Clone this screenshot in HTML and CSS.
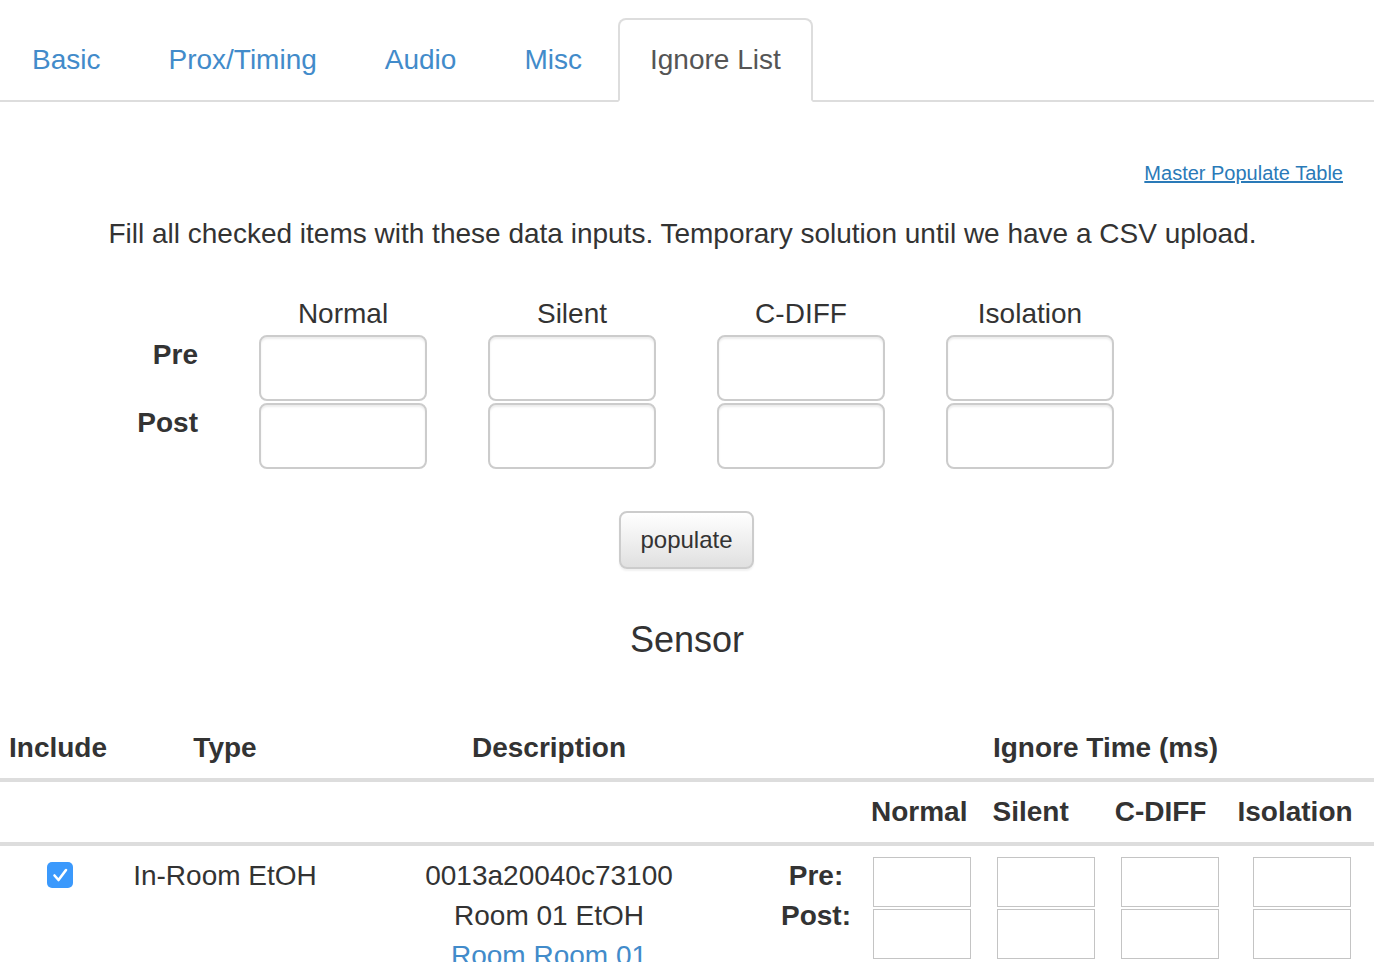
FILE: index.html
```html
<!DOCTYPE html>
<html>
<head>
<meta charset="utf-8">
<title>Ignore List</title>
<link rel="stylesheet" href="styles.css">
</head>
<body>
<div class="page">
  <ul class="tabs">
    <li class="tab"><a href="#">Basic</a></li>
    <li class="tab"><a href="#">Prox/Timing</a></li>
    <li class="tab"><a href="#">Audio</a></li>
    <li class="tab"><a href="#">Misc</a></li>
    <li class="tab active"><a href="#">Ignore List</a></li>
  </ul>

  <div class="master-row"><a class="master-link" href="#">Master Populate Table</a></div>

  <p class="intro">Fill all checked items with these data inputs. Temporary solution until we have a CSV upload.</p>

  <div class="fill-grid">
    <div></div>
    <div class="col-head">Normal</div>
    <div class="col-head">Silent</div>
    <div class="col-head">C-DIFF</div>
    <div class="col-head">Isolation</div>

    <div class="row-label">Pre</div>
    <input class="big-input" type="text">
    <input class="big-input" type="text">
    <input class="big-input" type="text">
    <input class="big-input" type="text">

    <div class="row-label">Post</div>
    <input class="big-input" type="text">
    <input class="big-input" type="text">
    <input class="big-input" type="text">
    <input class="big-input" type="text">
  </div>

  <div class="btn-row"><button class="btn" type="button">populate</button></div>

  <h4 class="section-title">Sensor</h4>

  <div class="tbl">
    <div class="thead-main">
      <div class="th">Include</div>
      <div class="th">Type</div>
      <div class="th">Description</div>
      <div class="th th-ignore">Ignore Time (ms)</div>
    </div>
    <div class="thead-sub">
      <span class="sub sub-normal">Normal</span>
      <span class="sub sub-silent">Silent</span>
      <span class="sub sub-cdiff">C-DIFF</span>
      <span class="sub sub-iso">Isolation</span>
    </div>
    <div class="trow">
      <div class="td td-check">
        <span class="checkbox"><svg width="26" height="26" viewBox="0 0 26 26"><path d="M7.5 13.5 L11.5 18 L19 8" fill="none" stroke="#fff" stroke-width="2.6" stroke-linecap="round" stroke-linejoin="round"/></svg></span>
      </div>
      <div class="td">In-Room EtOH</div>
      <div class="td td-desc">
        <div>0013a20040c73100</div>
        <div>Room 01 EtOH</div>
        <a href="#" class="room-link">Room Room 01</a>
      </div>
      <div class="td td-prepost">
        <div>Pre:</div>
        <div>Post:</div>
      </div>
      <div class="td td-inputs">
        <div class="in-col"><input class="sm-input" type="text"><input class="sm-input" type="text"></div>
        <div class="in-col"><input class="sm-input" type="text"><input class="sm-input" type="text"></div>
        <div class="in-col"><input class="sm-input" type="text"><input class="sm-input" type="text"></div>
        <div class="in-col in-col-last"><input class="sm-input" type="text"><input class="sm-input" type="text"></div>
      </div>
    </div>
  </div>
</div>
</body>
</html>
```

FILE: styles.css
```css
* { box-sizing: border-box; }

html, body {
  margin: 0;
  padding: 0;
  background: #fff;
}

body {
  font-family: "Liberation Sans", Arial, Helvetica, sans-serif;
  color: #333;
  font-size: 28px;
  line-height: 40px;
  overflow: hidden;
}

.page {
  width: 1374px;
}

/* Tabs */
.tabs {
  list-style: none;
  margin: 0;
  padding: 18px 0 0 0;
  display: flex;
  border-bottom: 2px solid #ddd;
}

.tab {
  margin-right: 4px;
  margin-bottom: -2px;
  border: 2px solid transparent;
  border-radius: 8px 8px 0 0;
}

.tab a {
  display: block;
  padding: 20px 30px;
  font-size: 28px;
  line-height: 40px;
  color: #428bca;
  text-decoration: none;
}

.tab.active {
  border-color: #ddd;
  border-bottom-color: #fff;
  background: #fff;
}

.tab.active a {
  color: #555;
}

/* Master link */
.master-row {
  margin-top: 57px;
  padding-right: 31px;
  display: flex;
  justify-content: flex-end;
}

.master-link {
  font-size: 20px;
  line-height: 28px;
  color: #2a7ab8;
  text-decoration: underline;
}

.intro {
  margin: 27px 0 0 0;
  padding-right: 9px;
  text-align: center;
  font-size: 28px;
  line-height: 40px;
}

/* Fill grid */
.fill-grid {
  margin-top: 40px;
  display: grid;
  grid-template-columns: 198px repeat(4, 168px);
  column-gap: 61px;
  row-gap: 2px;
  grid-template-rows: 39px 66px 66px;
}

.col-head {
  text-align: center;
  font-size: 28px;
  line-height: 40px;
}

.row-label {
  text-align: right;
  font-weight: bold;
  font-size: 28px;
  line-height: 40px;
}

.big-input {
  width: 168px;
  height: 66px;
  border: 2px solid #ccc;
  border-radius: 8px;
  box-shadow: inset 0 2px 2px rgba(0,0,0,0.075);
  background: #fff;
  margin: 0;
  padding: 0 12px;
  font: inherit;
}

/* Button */
.btn-row {
  margin-top: 42px;
  display: flex;
  justify-content: center;
}

.btn {
  width: 135px;
  height: 58px;
  margin-left: -1px;
  font-family: inherit;
  font-size: 24px;
  color: #333;
  border: 2px solid #ccc;
  border-radius: 8px;
  background: linear-gradient(#ffffff, #e0e0e0);
  box-shadow: 0 2px 2px rgba(0,0,0,0.06);
  padding: 0;
}

.section-title {
  margin: 51px 0 0 0;
  text-align: center;
  font-size: 36px;
  line-height: 40px;
  font-weight: normal;
}

/* Table */
.tbl {
  margin-top: 58px;
}

.thead-main {
  display: grid;
  grid-template-columns: 120px 210px 438px 1fr;
  padding: 10px 0;
  border-bottom: 4px solid #ddd;
}

.th {
  text-align: center;
  font-weight: bold;
  font-size: 28px;
  line-height: 40px;
}

.th:first-child {
  text-align: left;
  padding-left: 9px;
}

.th-ignore {
  padding-left: 69px;
}

.thead-sub {
  display: flex;
  padding: 10px 0 10px 871px;
  border-bottom: 4px solid #ddd;
  font-weight: bold;
  font-size: 28px;
  line-height: 40px;
}

.sub-silent { margin-left: 25px; }
.sub-cdiff { margin-left: 46px; }
.sub-iso { margin-left: 31px; }

.trow {
  display: grid;
  grid-template-columns: 120px 210px 438px 96px 1fr;
  padding-top: 10px;
  font-size: 28px;
  line-height: 40px;
}

.td {
  text-align: center;
}

.td-check {
  display: flex;
  justify-content: center;
  padding-top: 6px;
}

.checkbox {
  display: block;
  width: 26px;
  height: 26px;
  border-radius: 5px;
  background: #3b99fc;
}

.checkbox svg {
  display: block;
}

.room-link {
  color: #428bca;
  text-decoration: none;
}

.td-prepost {
  font-weight: bold;
}

.td-inputs {
  display: flex;
  padding-left: 9px;
  margin-top: 1px;
}

.in-col {
  display: flex;
  flex-direction: column;
  gap: 2px;
  margin-right: 26px;
}

.in-col:nth-child(3) {
  margin-right: 34px;
}

.in-col-last {
  margin-right: 0;
}

.sm-input {
  width: 98px;
  height: 50px;
  border: 1px solid #c4c4c4;
  border-radius: 0;
  margin: 0;
  padding: 0 6px;
  background: #fff;
  font: inherit;
}
```
